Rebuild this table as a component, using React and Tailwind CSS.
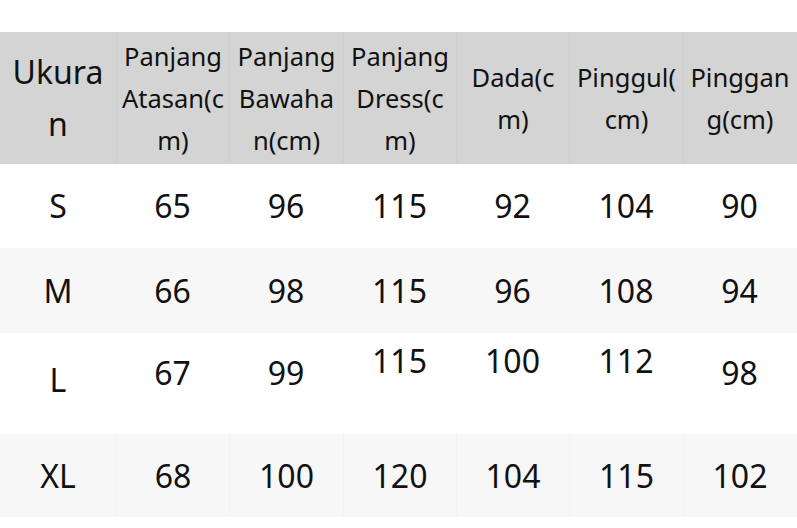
import React from "react";

const COLS = "grid grid-cols-[116px_113px_114px_113px_113px_114px_113px]";

const headers = [
  { lines: ["Ukura", "n"], big: true },
  { lines: ["Panjang", "Atasan(c", "m)"] },
  { lines: ["Panjang", "Bawaha", "n(cm)"] },
  { lines: ["Panjang", "Dress(c", "m)"] },
  { lines: ["Dada(c", "m)"] },
  { lines: ["Pinggul(", "cm)"] },
  { lines: ["Pinggan", "g(cm)"] },
];

const rows = [
  { cells: ["S", "65", "96", "115", "92", "104", "90"], h: "h-[84px]", bg: "bg-white" },
  { cells: ["M", "66", "98", "115", "96", "108", "94"], h: "h-[85px]", bg: "bg-[#f7f7f7]" },
  {
    cells: ["L", "67", "99", "115", "100", "112", "98"],
    h: "h-[101px]",
    bg: "bg-white",
    pad: ["pb-[7px]", "pb-[21px]", "pb-[21px]", "pb-[45px]", "pb-[45px]", "pb-[45px]", "pb-[21px]"],
  },
  { cells: ["XL", "68", "100", "120", "104", "115", "102"], h: "h-[83px]", bg: "bg-[#f7f7f7]", lines: true },
];

export default function App() {
  return (
    <div className="h-[528px] w-[797px] bg-white pt-[32px] font-['Noto_Sans',sans-serif] text-[#111111]">
      <div className={`${COLS} h-[132px] bg-[#d4d4d4]`}>
        {headers.map((head, i) => (
          <div
            key={i}
            className={`flex flex-col items-center justify-center text-center whitespace-nowrap ${
              i > 0 ? "border-l border-[#cecece]" : ""
            } ${head.big ? "text-[32px] leading-[52px]" : "text-[25.5px] leading-[42px]"}`}
          >
            {head.lines.map((line) => (
              <span key={line}>{line}</span>
            ))}
          </div>
        ))}
      </div>

      {rows.map((row) => (
        <div key={row.cells[0]} className={`${COLS} ${row.h} ${row.bg}`}>
          {row.cells.map((cell, i) => (
            <div
              key={i}
              className={`flex items-center justify-center text-[32px] leading-[40px] ${row.pad ? row.pad[i] : ""} ${
                row.lines && i > 0 ? "border-l border-[#f2f2f2]" : ""
              }`}
            >
              {cell}
            </div>
          ))}
        </div>
      ))}
    </div>
  );
}
